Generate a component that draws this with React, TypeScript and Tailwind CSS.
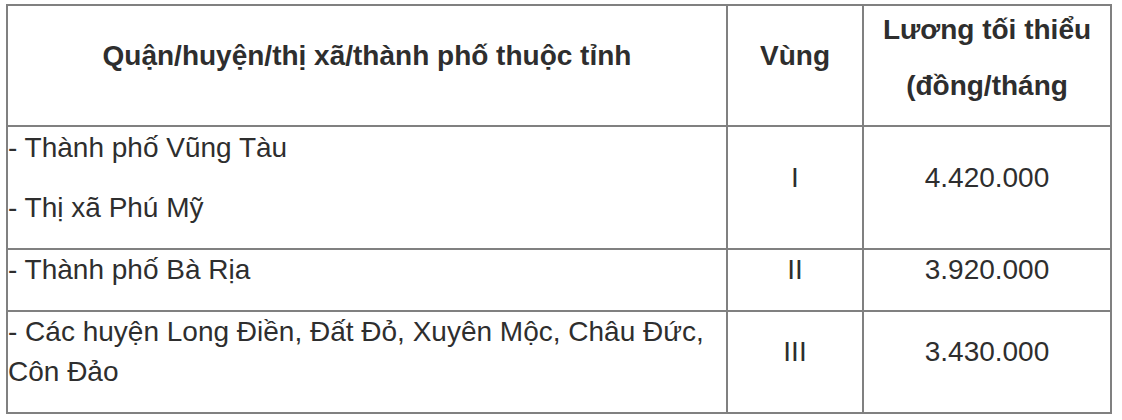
import { Fragment } from "react";

const rows = [
  { places: ["- Thành phố Vũng Tàu", "- Thị xã Phú Mỹ"], zone: "I", wage: "4.420.000" },
  { places: ["- Thành phố Bà Rịa"], zone: "II", wage: "3.920.000" },
  {
    places: ["- Các huyện Long Điền, Đất Đỏ, Xuyên Mộc, Châu Đức, Côn Đảo"],
    zone: "III",
    wage: "3.430.000",
  },
];

export default function App() {
  return (
    <div className="min-h-[420px] bg-white pl-[6px] pt-[4px] font-['Liberation_Sans',Arial,sans-serif] text-[28px] leading-[40px] text-[#2e2e2e]">
      <div className="grid w-[1106px] grid-cols-[718px_134px_246px] grid-rows-[119px_121px_60px_100px] gap-[2px] bg-[#808080] p-[2px]">
        {/* header */}
        <div className="flex flex-col justify-center bg-white text-center font-bold">
          <p className="mb-[20px]">Quận/huyện/thị xã/thành phố thuộc tỉnh</p>
        </div>
        <div className="flex flex-col justify-center bg-white text-center font-bold">
          <p className="mb-[20px]">Vùng</p>
        </div>
        <div className="flex flex-col justify-start bg-white pt-[4px] text-center font-bold">
          <p className="mb-[16px]">Lương tối thiểu</p>
          <p>(đồng/tháng</p>
        </div>

        {rows.map((r) => (
          <Fragment key={r.zone}>
            <div className="flex flex-col justify-center overflow-hidden bg-white">
              {r.places.map((p) => (
                <p key={p} className="mb-[20px]">
                  {p}
                </p>
              ))}
            </div>
            <div className="flex flex-col justify-center bg-white text-center">
              <p className="mb-[20px]">{r.zone}</p>
            </div>
            <div className="flex flex-col justify-center bg-white text-center">
              <p className="mb-[20px]">{r.wage}</p>
            </div>
          </Fragment>
        ))}
      </div>
    </div>
  );
}
